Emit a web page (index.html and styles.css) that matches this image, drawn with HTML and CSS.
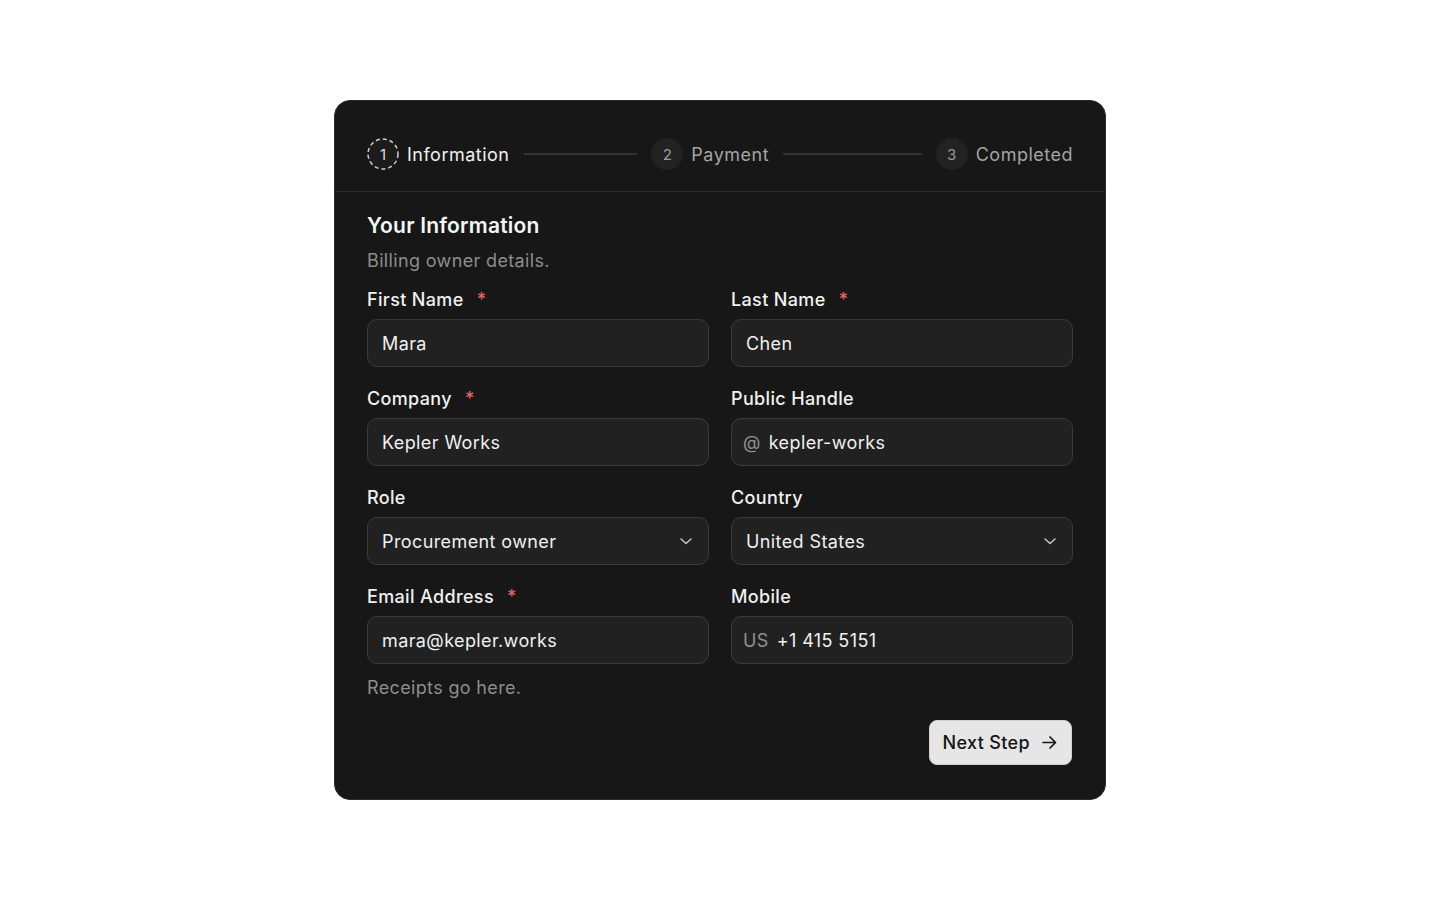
FILE: index.html
```html
<!DOCTYPE html>
<html lang="en">
  <head>
    <meta charset="UTF-8" />
    <meta name="viewport" content="width=device-width, initial-scale=1.0" />
    <title>Checkout - Your Information</title>
    <link rel="stylesheet" href="styles.css">
  </head>
  <body>
    <div class="card">
      <div class="stepper">
        <div class="step active">
          <span class="step-num">
            <svg class="step-ring" width="32" height="32" viewBox="0 0 32 32" fill="none">
              <circle cx="16" cy="16" r="15" stroke="#cfcfcf" stroke-width="1.5" stroke-dasharray="4 3" />
            </svg>
            1
          </span>
          <span class="step-label">Information</span>
          <span class="step-line"></span>
        </div>
        <div class="step">
          <span class="step-num">2</span>
          <span class="step-label">Payment</span>
          <span class="step-line"></span>
        </div>
        <div class="step last">
          <span class="step-num">3</span>
          <span class="step-label">Completed</span>
        </div>
      </div>

      <div class="card-body">
        <h1 class="title">Your Information</h1>
        <p class="subtitle">Billing owner details.</p>

        <div class="form-grid">
          <div class="form-group">
            <label>First Name <span class="req">*</span></label>
            <div class="field"><input type="text" value="Mara" /></div>
          </div>
          <div class="form-group">
            <label>Last Name <span class="req">*</span></label>
            <div class="field"><input type="text" value="Chen" /></div>
          </div>
          <div class="form-group">
            <label>Company <span class="req">*</span></label>
            <div class="field"><input type="text" value="Kepler Works" /></div>
          </div>
          <div class="form-group">
            <label>Public Handle</label>
            <div class="field with-prefix">
              <span class="prefix">@</span>
              <input type="text" value="kepler-works" />
            </div>
          </div>
          <div class="form-group">
            <label>Role</label>
            <div class="field select">
              <span class="value">Procurement owner</span>
              <svg class="chevron" width="14" height="14" viewBox="0 0 14 14" fill="none">
                <path d="M2 5l5 4.5L12 5" stroke="#c2c2c2" stroke-width="1.6" stroke-linecap="round" stroke-linejoin="round" />
              </svg>
            </div>
          </div>
          <div class="form-group">
            <label>Country</label>
            <div class="field select">
              <span class="value">United States</span>
              <svg class="chevron" width="14" height="14" viewBox="0 0 14 14" fill="none">
                <path d="M2 5l5 4.5L12 5" stroke="#c2c2c2" stroke-width="1.6" stroke-linecap="round" stroke-linejoin="round" />
              </svg>
            </div>
          </div>
          <div class="form-group">
            <label>Email Address <span class="req">*</span></label>
            <div class="field"><input type="email" value="mara@kepler.works" /></div>
            <p class="hint">Receipts go here.</p>
          </div>
          <div class="form-group">
            <label>Mobile</label>
            <div class="field with-prefix phone">
              <span class="prefix">US</span>
              <input type="tel" value="+1 415 5151" />
            </div>
          </div>
        </div>

        <div class="actions">
          <button class="next-btn">
            Next Step
            <svg width="17" height="17" viewBox="0 0 17 17" fill="none">
              <path d="M2 8.5h12.5M9 3l5.5 5.5L9 14" stroke="#151515" stroke-width="1.7" stroke-linecap="round" stroke-linejoin="round" />
            </svg>
          </button>
        </div>
      </div>
    </div>
  </body>
</html>
```

FILE: styles.css
```css
* {
  box-sizing: border-box;
}

body {
  font-family: Inter, "Noto Sans", sans-serif;
  background-color: #fff;
  display: flex;
  justify-content: center;
  align-items: flex-start;
  height: 100vh;
  margin: 0;
  padding-top: 100px;
  letter-spacing: 0.35px;
}

.card {
  width: 772px;
  background-color: #171717;
  border: 1px solid #2c2c2c;
  border-radius: 16px;
  color: #ececec;
}

/* stepper */
.stepper {
  display: flex;
  align-items: center;
  padding: 37px 32px 21px;
  border-bottom: 1px solid #2a2a2a;
}

.step {
  flex: 1;
  display: flex;
  align-items: center;
  gap: 8px;
}

.step.last {
  flex: none;
}

.step-num {
  position: relative;
  flex: none;
  width: 32px;
  height: 32px;
  border-radius: 50%;
  background-color: #222;
  color: #9a9a9a;
  font-size: 15px;
  letter-spacing: 0;
  display: flex;
  align-items: center;
  justify-content: center;
}

.step-ring {
  position: absolute;
  top: 0;
  left: 0;
}

.step-label {
  font-size: 18px;
  letter-spacing: 0.5px;
  color: #a3a3a3;
}

.step.active .step-num {
  background-color: #1c1c1c;
  color: #dedede;
}

.step.active .step-label {
  color: #f0f0f0;
}

.step-line {
  flex: 1;
  height: 2px;
  background-color: #333;
  margin: 0 14px 0 6px;
}

/* body */
.card-body {
  padding: 20px 32px 34px;
}

.title {
  margin: 0;
  font-size: 21px;
  line-height: 28px;
  font-weight: 600;
  letter-spacing: 0.2px;
  color: #f5f5f5;
}

.subtitle {
  margin: 9px 0 0;
  font-size: 18px;
  line-height: 24px;
  color: #8d8d8d;
}

.form-grid {
  display: grid;
  grid-template-columns: minmax(0, 1fr) minmax(0, 1fr);
  column-gap: 22px;
  row-gap: 20px;
  margin-top: 15px;
}

.form-group label {
  display: block;
  font-size: 18px;
  line-height: 24px;
  font-weight: 500;
  color: #f0f0f0;
  margin-bottom: 7px;
}

.req {
  color: #e5636a;
  margin-left: 8px;
}

.field {
  height: 48px;
  display: flex;
  align-items: center;
  padding: 0 14px;
  background-color: #212121;
  border: 1px solid #3b3b3b;
  border-radius: 10px;
}

.field input {
  flex: 1;
  min-width: 0;
  background: none;
  border: none;
  outline: none;
  padding: 0;
  font-family: inherit;
  font-size: 18px;
  letter-spacing: 0.4px;
  color: #f0f0f0;
}

.with-prefix {
  padding-left: 11px;
  gap: 8px;
}

.prefix {
  font-size: 18px;
  color: #8f8f8f;
}

.select {
  justify-content: space-between;
  padding-right: 15px;
}

.select .value {
  font-size: 18px;
  letter-spacing: 0.4px;
  color: #f0f0f0;
}

.hint {
  margin: 12px 0 0;
  font-size: 18px;
  line-height: 24px;
  color: #8d8d8d;
}

.actions {
  display: flex;
  justify-content: flex-end;
  margin-top: 20px;
}

.next-btn {
  display: flex;
  align-items: center;
  gap: 11px;
  height: 45px;
  padding: 0 13px;
  margin-right: 1px;
  background-color: #e6e6e6;
  color: #151515;
  border: 1px solid #d0d0d0;
  border-radius: 8px;
  font-family: inherit;
  font-size: 18px;
  font-weight: 500;
  letter-spacing: 0.35px;
  cursor: pointer;
}

.next-btn:hover {
  background-color: #d6d6d6;
}
```
